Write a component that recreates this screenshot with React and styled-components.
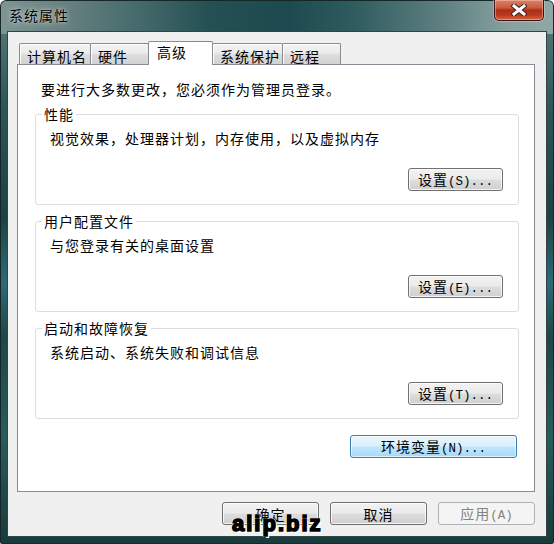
import React from "react";
import styled, { createGlobalStyle, css } from "styled-components";

const CJK = `"Noto Sans CJK SC", "Liberation Sans", sans-serif`;

const GlobalStyle = createGlobalStyle`
  html, body {
    margin: 0;
    padding: 0;
    background: #fff;
  }
  body {
    font-family: ${CJK};
    font-size: 14px;
    color: #000;
  }
`;

const Window = styled.div`
  position: relative;
  width: 554px;
  height: 544px;
  box-sizing: border-box;
  display: flex;
  flex-direction: column;
  border-radius: 6px 6px 2px 2px;
  overflow: hidden;
  background:
    linear-gradient(
        to right,
        #7e9594 0%,
        #66807f 12%,
        #456a6b 25%,
        #245053 38%,
        #1c4a4e 52%,
        #2f5c5f 64%,
        #5f8081 80%,
        #88a1a0 92%,
        #8fa8a7 100%
      )
      top / 100% 34px no-repeat,
    linear-gradient(
      to bottom,
      #5d7f80 0%,
      #2c5556 20%,
      #1d4243 40%,
      #2d6a78 52%,
      #1e4646 62%,
      #295c5c 80%,
      #193a3a 100%
    );
  box-shadow: inset 0 0 0 1px #162727;
`;

const TitleBar = styled.div`
  height: 31px;
  flex: none;
  display: flex;
  justify-content: space-between;
  align-items: flex-start;
  padding: 0 10px 0 9px;
`;

const Title = styled.div`
  padding-top: 7px;
  line-height: 16px;
  font-size: 14px;
  letter-spacing: 1px;
  color: #000;
  text-shadow: 0 0 6px rgba(255, 255, 255, 0.75), 0 0 2px rgba(255, 255, 255, 0.5);
`;

const CloseButton = styled.div`
  width: 50px;
  height: 21px;
  box-sizing: border-box;
  border: 1px solid #3e1410;
  border-top: none;
  border-radius: 0 0 5px 5px;
  background: linear-gradient(
    #d9826a 0%,
    #c95a3c 40%,
    #ad2e18 50%,
    #b83a20 75%,
    #d8643e 100%
  );
  box-shadow: inset 0 0 0 1px rgba(255, 210, 190, 0.45),
    0 0 0 1px rgba(220, 235, 235, 0.35);
  display: flex;
  align-items: center;
  justify-content: center;
`;

const Client = styled.div`
  flex: 1;
  margin: 0 7px 7px 7px;
  border: 1px solid #2f4445;
  background: #f0f0f0;
  padding: 9px 11px 11px 9px;
  display: flex;
  flex-direction: column;
`;

const TabRow = styled.div`
  display: flex;
  align-items: flex-end;
  height: 23px;
  padding-left: 2px;
  position: relative;
  z-index: 1;
`;

const Tab = styled.div`
  box-sizing: border-box;
  width: ${(p) => p.$width}px;
  margin-right: -1px;
  border: 1px solid #898c95;
  border-bottom: none;
  border-radius: 2px 2px 0 0;
  line-height: 16px;
  letter-spacing: 1px;
  white-space: nowrap;
  ${(p) =>
    p.$active
      ? css`
          position: relative;
          z-index: 2;
          height: 24px;
          margin-bottom: -1px;
          padding: 2px 0 0 8px;
          background: #fff;
        `
      : css`
          height: 21px;
          padding: 4px 0 0 7px;
          background: linear-gradient(#f3f3f3, #ebebeb 45%, #dcdcdc 55%, #d2d2d2);
          box-shadow: inset 1px 1px 0 rgba(255, 255, 255, 0.9);
        `}
`;

const Panel = styled.div`
  box-sizing: border-box;
  height: 428px;
  flex: none;
  background: #fff;
  border: 1px solid #898c95;
  padding: 16px 15px 0 17px;
  display: flex;
  flex-direction: column;
`;

const Intro = styled.div`
  margin-left: 6px;
  line-height: 16px;
  letter-spacing: 1px;
`;

const Group = styled.div`
  position: relative;
  box-sizing: border-box;
  height: 91px;
  margin-top: ${(p) => (p.$first ? 17 : 16)}px;
  border: 1px solid #d5dfe5;
  border-radius: 3px;
  padding: 15px 15px 0 14px;
  display: flex;
  flex-direction: column;
`;

const Legend = styled.span`
  position: absolute;
  top: -9px;
  left: 6px;
  padding: 0 2px;
  background: #fff;
  line-height: 16px;
  letter-spacing: 1px;
`;

const Desc = styled.div`
  line-height: 16px;
  letter-spacing: 1px;
`;

const Button = styled.button`
  box-sizing: border-box;
  width: ${(p) => p.$width}px;
  height: 23px;
  flex: none;
  padding: 0;
  border: 1px solid #707070;
  border-radius: 3px;
  font-family: ${CJK};
  font-size: 14px;
  line-height: 20px;
  letter-spacing: 1px;
  color: #000;
  background: linear-gradient(#f2f2f2, #ebebeb 48%, #dddddd 52%, #cfcfcf);
  box-shadow: inset 0 0 0 1px rgba(255, 255, 255, 0.75);
  ${(p) =>
    p.$primary &&
    css`
      border-color: #3c7fb1;
      background: linear-gradient(#eaf6fd, #d9f0fc 48%, #bee6fd 52%, #a7d9f5);
      box-shadow: inset 0 0 0 1px rgba(255, 255, 255, 0.6);
    `}
  &:disabled {
    color: #838383;
    border-color: #adb2b5;
    background: #f4f4f4;
    box-shadow: none;
  }
`;

const GroupButton = styled(Button)`
  align-self: flex-end;
  margin-top: 22px;
`;

const EnvButton = styled(Button)`
  align-self: flex-end;
  margin-top: 16px;
  margin-right: 2px;
`;

const Key = styled.span`
  font-family: "Liberation Mono", monospace;
  font-size: 12.5px;
  letter-spacing: 0;
`;

const Footer = styled.div`
  display: flex;
  justify-content: flex-end;
  gap: 11px;
  margin-top: 10px;
`;

const Watermark = styled.div`
  position: absolute;
  left: 232px;
  top: 513px;
  font-family: "Liberation Sans", Arial, sans-serif;
  font-weight: 700;
  font-size: 22px;
  line-height: 22px;
  letter-spacing: 2px;
  color: #000;
  -webkit-text-stroke: 1.6px #000;
  text-shadow: 1px 1px 0 #fff, -1px 1px 0 #fff, 1px -1px 0 #fff, -1px -1px 0 #fff,
    2px 2px 0 #fff;
`;

const CloseIcon = () => (
  <svg width="16" height="12" viewBox="0 0 16 12">
    <path d="M3 2 L13 10 M13 2 L3 10" stroke="#3a2420" strokeWidth="5" strokeLinecap="square" />
    <path d="M3 2 L13 10 M13 2 L3 10" stroke="#fff" strokeWidth="3" strokeLinecap="square" />
  </svg>
);

const tabs = [
  { label: "计算机名", width: 72 },
  { label: "硬件", width: 59 },
  { label: "高级", width: 65, active: true },
  { label: "系统保护", width: 71 },
  { label: "远程", width: 59 },
];

const groups = [
  { title: "性能", desc: "视觉效果，处理器计划，内存使用，以及虚拟内存", key: "S" },
  { title: "用户配置文件", desc: "与您登录有关的桌面设置", key: "E" },
  { title: "启动和故障恢复", desc: "系统启动、系统失败和调试信息", key: "T" },
];

export default function App() {
  return (
    <>
      <GlobalStyle />
      <Window>
        <TitleBar>
          <Title>系统属性</Title>
          <CloseButton>
            <CloseIcon />
          </CloseButton>
        </TitleBar>
        <Client>
          <TabRow>
            {tabs.map((t) => (
              <Tab key={t.label} $width={t.width} $active={t.active}>
                {t.label}
              </Tab>
            ))}
          </TabRow>
          <Panel>
            <Intro>要进行大多数更改，您必须作为管理员登录。</Intro>
            {groups.map((g, i) => (
              <Group key={g.title} $first={i === 0}>
                <Legend>{g.title}</Legend>
                <Desc>{g.desc}</Desc>
                <GroupButton $width={95}>
                  设置<Key>({g.key})...</Key>
                </GroupButton>
              </Group>
            ))}
            <EnvButton $width={167} $primary>
              环境变量<Key>(N)...</Key>
            </EnvButton>
          </Panel>
          <Footer>
            <Button $width={97}>确定</Button>
            <Button $width={97}>取消</Button>
            <Button $width={97} disabled>
              应用<Key>(A)</Key>
            </Button>
          </Footer>
        </Client>
        <Watermark>alip.biz</Watermark>
      </Window>
    </>
  );
}
